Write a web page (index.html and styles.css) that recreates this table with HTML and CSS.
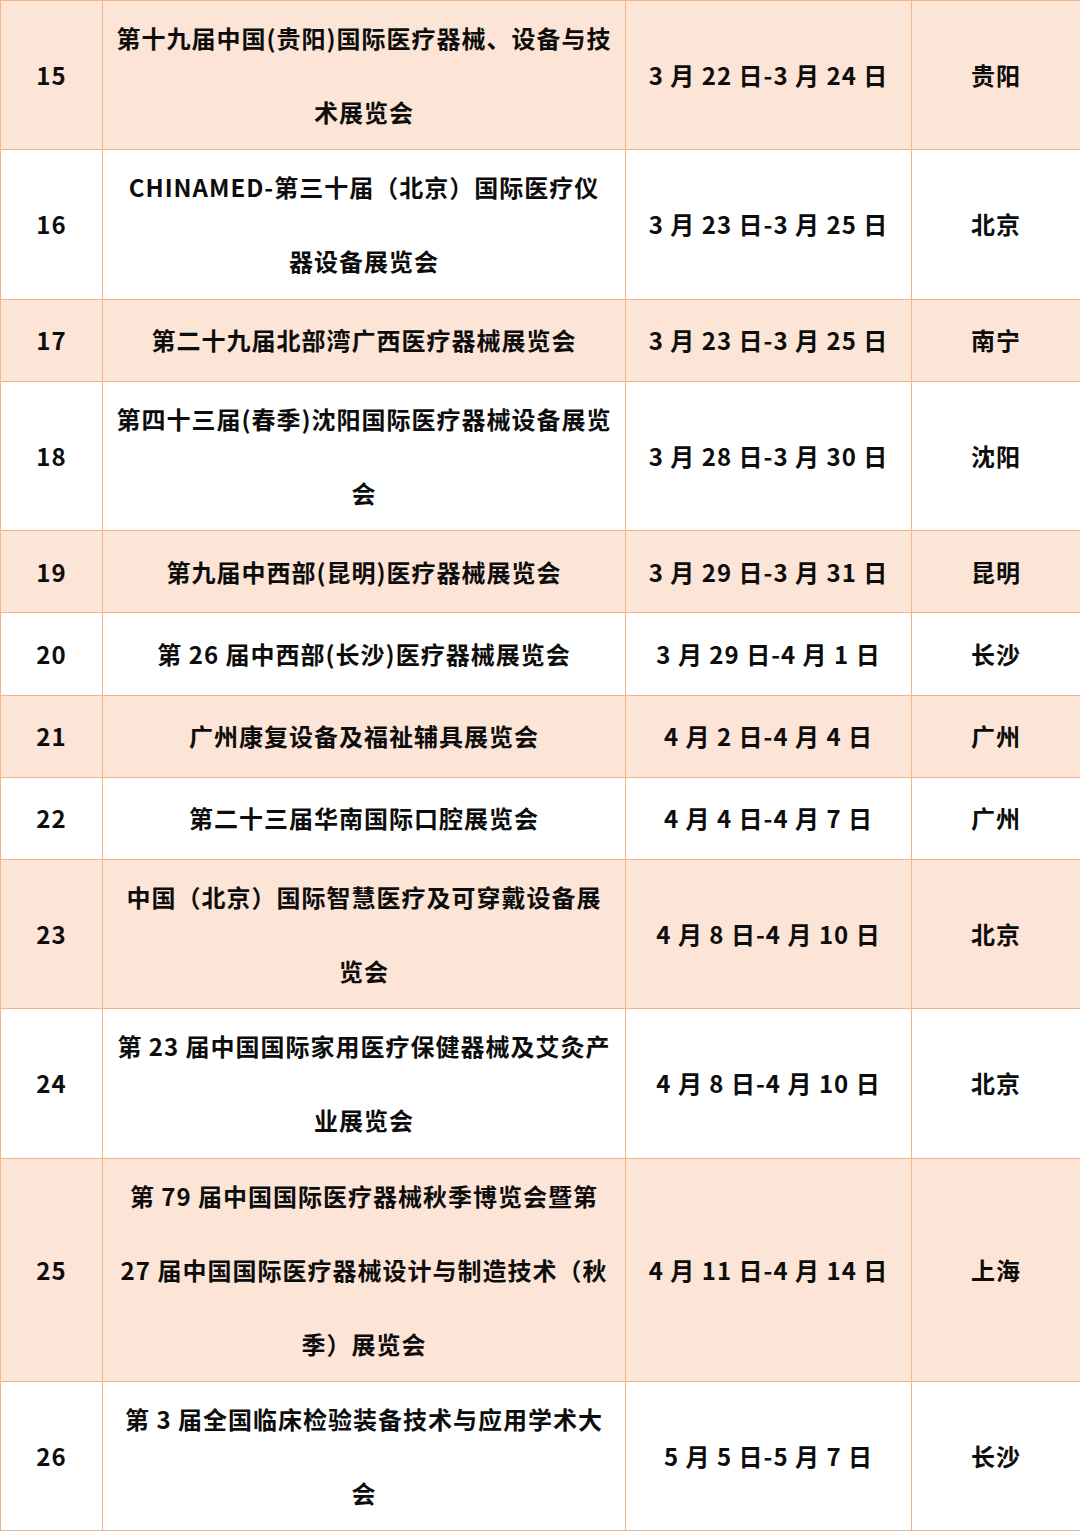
FILE: index.html
```html
<!DOCTYPE html>
<html lang="zh-CN">
<head>
<meta charset="utf-8">
<title>医疗器械展会</title>
<link rel="stylesheet" href="styles.css">
</head>
<body>
<table class="expo">
  <colgroup>
    <col class="c-no"><col class="c-name"><col class="c-date"><col class="c-city">
  </colgroup>
  <tbody>
    <tr class="alt"><td>15</td><td>第十九届中国(贵阳)国际医疗器械、设备与技<br>术展览会</td><td>3 月 22 日-3 月 24 日</td><td>贵阳</td></tr>
    <tr><td>16</td><td>CHINAMED-第三十届（北京）国际医疗仪<br>器设备展览会</td><td>3 月 23 日-3 月 25 日</td><td>北京</td></tr>
    <tr class="alt"><td>17</td><td>第二十九届北部湾广西医疗器械展览会</td><td>3 月 23 日-3 月 25 日</td><td>南宁</td></tr>
    <tr><td>18</td><td>第四十三届(春季)沈阳国际医疗器械设备展览<br>会</td><td>3 月 28 日-3 月 30 日</td><td>沈阳</td></tr>
    <tr class="alt"><td>19</td><td>第九届中西部(昆明)医疗器械展览会</td><td>3 月 29 日-3 月 31 日</td><td>昆明</td></tr>
    <tr><td>20</td><td>第 26 届中西部(长沙)医疗器械展览会</td><td>3 月 29 日-4 月 1 日</td><td>长沙</td></tr>
    <tr class="alt"><td>21</td><td>广州康复设备及福祉辅具展览会</td><td>4 月 2 日-4 月 4 日</td><td>广州</td></tr>
    <tr><td>22</td><td>第二十三届华南国际口腔展览会</td><td>4 月 4 日-4 月 7 日</td><td>广州</td></tr>
    <tr class="alt"><td>23</td><td>中国（北京）国际智慧医疗及可穿戴设备展<br>览会</td><td>4 月 8 日-4 月 10 日</td><td>北京</td></tr>
    <tr><td>24</td><td>第 23 届中国国际家用医疗保健器械及艾灸产<br>业展览会</td><td>4 月 8 日-4 月 10 日</td><td>北京</td></tr>
    <tr class="alt"><td>25</td><td>第 79 届中国国际医疗器械秋季博览会暨第<br>27 届中国国际医疗器械设计与制造技术（秋<br>季）展览会</td><td>4 月 11 日-4 月 14 日</td><td>上海</td></tr>
    <tr><td>26</td><td>第 3 届全国临床检验装备技术与应用学术大<br>会</td><td>5 月 5 日-5 月 7 日</td><td>长沙</td></tr>
  </tbody>
</table>
</body>
</html>
```

FILE: styles.css
```css
html, body {
  margin: 0;
  padding: 0;
  background: #ffffff;
}

.expo {
  width: 1080px;
  border-collapse: collapse;
  table-layout: fixed;
  font-family: "Noto Sans CJK SC", "Microsoft YaHei", sans-serif;
  font-weight: 700;
  font-size: 24px;
  letter-spacing: 1px;
  color: #0d0d0d;
}

.c-no { width: 102px; }
.c-name { width: 523px; }
.c-date { width: 286px; }
.c-city { width: 169px; }

.expo tr {
  height: 82.2px;
}

.expo td {
  border: 1.5px solid #f4b489;
  padding: 0 2px;
  line-height: 74.15px;
  text-align: center;
  vertical-align: middle;
  white-space: nowrap;
  overflow: hidden;
}

.expo tr.alt td {
  background: #fce4d6;
}
```
